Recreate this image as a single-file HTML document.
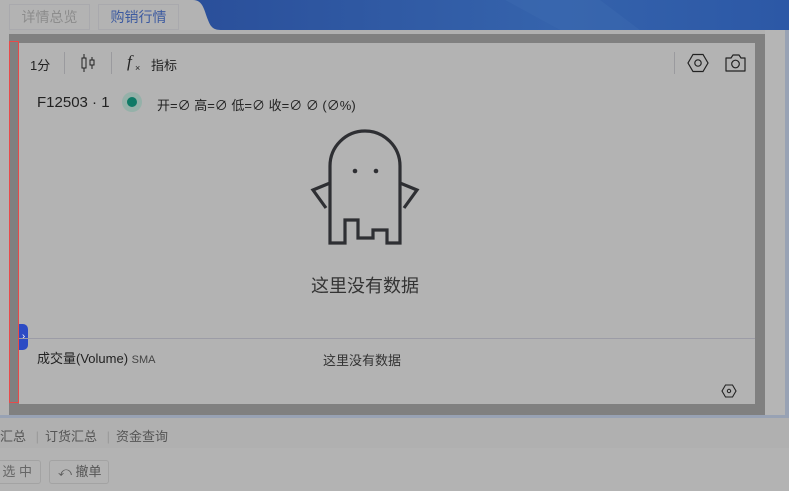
<!DOCTYPE html>
<html><head><meta charset="utf-8"><style>
*{margin:0;padding:0;box-sizing:border-box}
body{width:789px;height:491px;overflow:hidden;background:#b3b3b3;position:relative;font-family:"Liberation Sans","Noto Sans CJK SC",sans-serif;color:#222}
.a{position:absolute}
.tab{position:absolute;top:4px;height:26px;border:1px solid #a9a9ad;font-size:14px;line-height:24px;text-align:center}
</style></head><body>
<svg class="a" style="left:0;top:0" width="789" height="31">
<defs><linearGradient id="g" x1="0" x2="1"><stop offset="0" stop-color="#2a4f9a"/><stop offset="0.6" stop-color="#3563ac"/><stop offset="1" stop-color="#2c58a6"/></linearGradient></defs>
<path d="M193 0 C203 0 204 10 208 20 C211 28 214 30 222 30 L789 30 L789 0 Z" fill="url(#g)"/>
<path d="M505 0 L560 30 L640 30 L600 0Z" fill="#3c6ab0" opacity=".5"/>
</svg>
<div class="tab" style="left:9px;width:81px;color:#8c8c8c">详情总览</div>
<div class="tab" style="left:98px;width:81px;color:#3c5aa0">购销行情</div>
<div class="a" style="left:9px;top:30px;width:756px;height:4px;background:#b0b0b0"></div>
<div class="a" style="left:9px;top:34px;width:756px;height:381px;background:#808080"></div>
<div class="a" style="left:765px;top:30px;width:20px;height:385px;background:#b5b5b5"></div>
<div class="a" style="left:785px;top:30px;width:4px;height:388px;background:#98a2b4"></div>
<div class="a" style="left:0;top:415px;width:789px;height:3px;background:#98a2b4"></div>
<div class="a" style="left:19px;top:43px;width:736px;height:361px;background:#b3b3b3"></div>
<div class="a" style="left:9px;top:41px;width:10px;height:362px;border:1px solid #e84a4a;background:#808080"></div>
<div class="a" style="left:19px;top:324px;width:9px;height:26px;background:#2c4bc4;border-radius:0 5px 5px 0;color:#fff;font-size:10px;line-height:26px;text-align:center">›</div>
<div class="a" style="left:30px;top:55px;font-size:13px">1分</div>
<div class="a" style="left:64px;top:52px;width:1px;height:22px;background:#9a9a9e"></div>
<svg class="a" style="left:80px;top:52px" width="16" height="22"><path d="M4 2V20M12 5V17" stroke="#222" stroke-width="1"/><rect x="2" y="6" width="4" height="10" fill="#b3b3b3" stroke="#222"/><rect x="10" y="8" width="4" height="5" fill="#b3b3b3" stroke="#222"/></svg>
<div class="a" style="left:111px;top:52px;width:1px;height:22px;background:#9a9a9e"></div>
<div class="a" style="left:127px;top:52px;font-size:17px;font-family:'Liberation Serif',serif;font-style:italic">f</div>
<div class="a" style="left:135px;top:63px;font-size:9px">×</div>
<div class="a" style="left:151px;top:55px;font-size:13px">指标</div>
<div class="a" style="left:674px;top:52px;width:1px;height:22px;background:#9a9a9e"></div>
<svg class="a" style="left:686px;top:52px" width="24" height="22"><path d="M7 2.5H17L22 11L17 19.5H7L2 11Z" fill="none" stroke="#222" stroke-width="1.2"/><circle cx="12" cy="11" r="3.2" fill="none" stroke="#222" stroke-width="1.2"/></svg>
<svg class="a" style="left:724px;top:52px" width="24" height="22"><path d="M2 6H7L9 3H15L17 6H21V19H2Z" fill="none" stroke="#222" stroke-width="1.2" stroke-linejoin="round"/><circle cx="11.5" cy="12" r="3.8" fill="none" stroke="#222" stroke-width="1.2"/></svg>
<div class="a" style="left:37px;top:94px;font-size:15px">F12503 · 1</div>
<div class="a" style="left:122px;top:92px;width:20px;height:20px;border-radius:50%;background:#95b1a9"></div>
<div class="a" style="left:127px;top:97px;width:10px;height:10px;border-radius:50%;background:#0f7a66"></div>
<div class="a" style="left:157px;top:95px;font-size:13px">开=∅ 高=∅ 低=∅ 收=∅ ∅ (∅%)</div>
<svg class="a" style="left:300px;top:125px" width="130" height="125"><g fill="none" stroke="#2e2f33" stroke-width="3.2" stroke-linejoin="miter">
<path d="M30 118V41A35 35 0 0 1 100 41V118H87V105H73V113H58V95H45V118Z"/>
<path d="M30 58L13 65L26 83M100 58L117 65L104 83"/></g>
<circle cx="55" cy="46" r="2.3" fill="#2e2f33"/><circle cx="76" cy="46" r="2.3" fill="#2e2f33"/></svg>
<div class="a" style="left:311px;top:272px;font-size:18px;color:#333">这里没有数据</div>
<div class="a" style="left:19px;top:338px;width:736px;height:1px;background:#9c9ca6"></div>
<div class="a" style="left:37px;top:348px;font-size:13px">成交量(Volume) <span style="font-size:11px;color:#444">SMA</span></div>
<div class="a" style="left:323px;top:350px;font-size:13px;color:#333">这里没有数据</div>
<svg class="a" style="left:721px;top:383px" width="16" height="16"><path d="M4.5 2H11.5L15 8L11.5 14H4.5L1 8Z" fill="none" stroke="#222" stroke-width="1.1"/><circle cx="8" cy="8" r="1.7" fill="none" stroke="#222"/></svg>
<div class="a" style="left:0;top:418px;width:789px;height:30px;background:#b0b0b0"></div>
<div class="a" style="left:0;top:426px;font-size:13px;color:#555">汇总 <span style="color:#999;margin:0 6px">|</span>订货汇总 <span style="color:#999;margin:0 6px">|</span>资金查询</div>
<div class="a" style="left:-10px;top:460px;width:51px;height:24px;border:1px solid #a3a3a3;border-radius:3px;font-size:13px;line-height:22px;color:#666;text-align:right;padding-right:8px">选 中</div>
<div class="a" style="left:49px;top:460px;width:60px;height:24px;border:1px solid #a3a3a3;border-radius:3px;font-size:13px;line-height:22px;color:#555;padding-left:8px">⤺ 撤单</div>
</body></html>
